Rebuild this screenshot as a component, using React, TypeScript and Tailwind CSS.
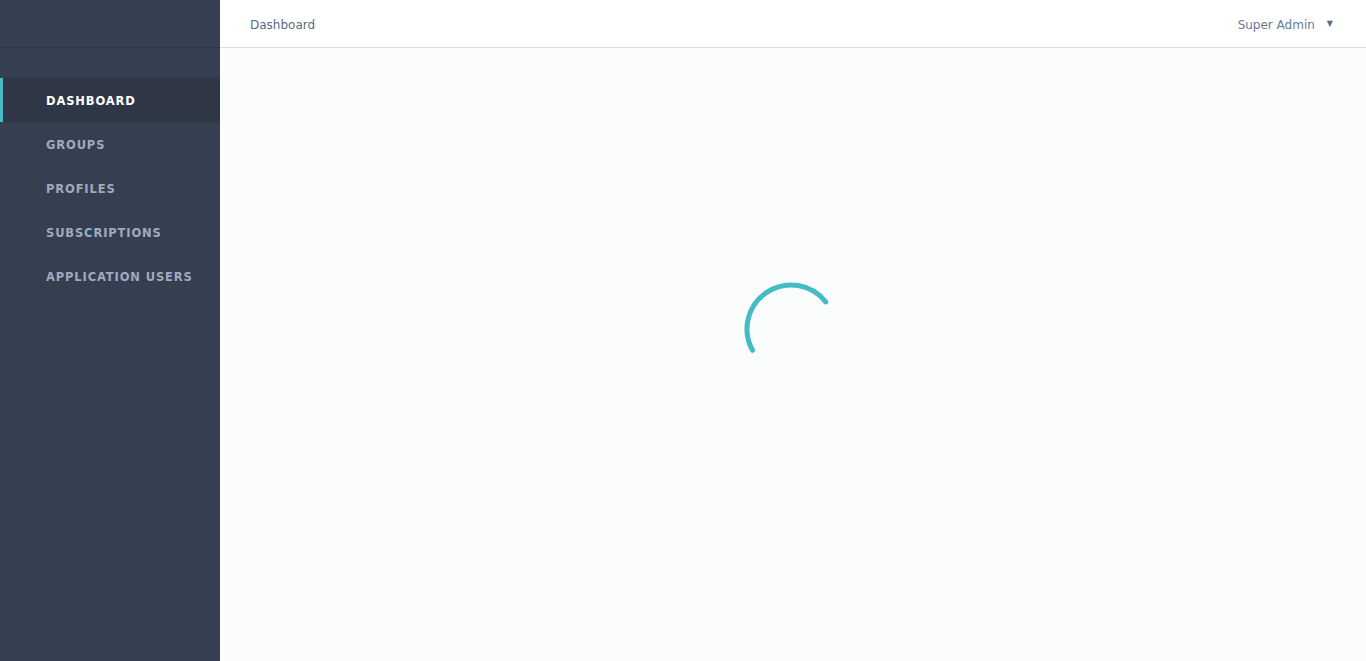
import React from "react";

const items = ["DASHBOARD", "GROUPS", "PROFILES", "SUBSCRIPTIONS", "APPLICATION USERS"];

function Spinner() {
  const cx = 50, cy = 50, r = 44;
  const a1 = (151 * Math.PI) / 180;
  const a2 = (322 * Math.PI) / 180;
  const x1 = cx + r * Math.cos(a1), y1 = cy + r * Math.sin(a1);
  const x2 = cx + r * Math.cos(a2), y2 = cy + r * Math.sin(a2);
  return (
    <svg width="100" height="100" viewBox="0 0 100 100">
      <path d={`M ${x1} ${y1} A ${r} ${r} 0 0 1 ${x2} ${y2}`} fill="none" stroke="#45bcc5" strokeWidth="5" strokeLinecap="round" />
    </svg>
  );
}

export default function App() {
  return (
    <div className="flex h-[661px] w-full" style={{ fontFamily: '"DejaVu Sans", "Open Sans", sans-serif' }}>
      <aside className="w-[220px] shrink-0 bg-[#363f4f] flex flex-col">
        <div className="h-[48px] border-b border-[#2f3746]" />
        <nav className="mt-[30px] flex flex-col">
          {items.map((it, i) => (
            <div
              key={it}
              className={
                "h-[44px] flex items-center pt-[3px] text-[11.5px] font-bold tracking-[0.075em] " +
                (i === 0
                  ? "bg-[#2f3747] text-white border-l-[3px] border-[#45bcc5] pl-[43px]"
                  : "text-[#9dabc0] pl-[46px]")
              }
            >
              {it}
            </div>
          ))}
        </nav>
      </aside>
      <main className="flex-1 flex flex-col bg-[#fbfdfd]">
        <header className="h-[48px] bg-white border-b border-[#dedfe0] flex items-center justify-between pt-[3px] pl-[30px] pr-[33px]">
          <span className="text-[12px] text-[#5b6b86]">Dashboard</span>
          <span className="flex items-center gap-[12px] text-[12px] text-[#6b7a93]">
            Super Admin
            <span className="text-[8px] text-[#5b6b86] -mt-[3px]">▼</span>
          </span>
        </header>
        <div className="flex-1 flex">
          <div className="ml-[521px] mt-[231px]">
            <Spinner />
          </div>
        </div>
      </main>
    </div>
  );
}
